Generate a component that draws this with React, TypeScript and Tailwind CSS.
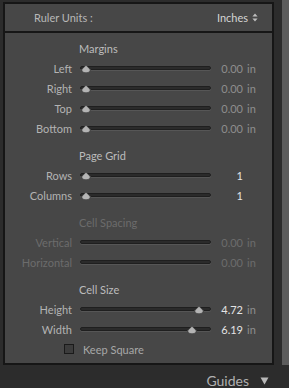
import { ReactNode } from "react";

type SliderRowProps = {
  label: string;
  value: string;
  unit?: string;
  pos?: number;
  disabled?: boolean;
  bright?: boolean;
};

function Thumb() {
  return (
    <svg width="10" height="8" viewBox="0 0 10 8" className="absolute top-[-2px]">
      <path d="M5 0.3 L9 4.2 Q9.7 7.7 5 7.7 Q0.3 7.7 1 4.2 Z" fill="#b4b4b4" stroke="#2a2a2a" strokeWidth="0.5" />
    </svg>
  );
}

function SliderRow({ label, value, unit, pos, disabled, bright }: SliderRowProps) {
  return (
    <div className="flex items-center h-[20px]">
      <div className={`w-[67px] text-right ${disabled ? "text-[#6c6c6c]" : "text-[#b3b3b3]"}`}>{label}</div>
      <div className="relative ml-[8px] w-[131px] h-[4px] rounded-full bg-[#2b2b2b] border border-[#1f1f1f] shadow-[0_1px_0_#565656]">
        {pos !== undefined && (
          <div
            className="absolute"
            style={{ left: `${pos}px` }}>
            <Thumb />
          </div>
        )}
      </div>
      <div className="flex ml-[8px] w-[50px]">
        <span className={`w-[24px] text-right ${disabled ? "text-[#6c6c6c]" : bright ? "text-[#e4e4e4]" : "text-[#8e8e8e]"}`}>{value}</span>
        {unit && <span className={`ml-[4px] ${disabled ? "text-[#6c6c6c]" : "text-[#8e8e8e]"}`}>{unit}</span>}
      </div>
    </div>
  );
}

function Section({ title, disabled, children }: { title: string; disabled?: boolean; children: ReactNode }) {
  return (
    <div className="flex flex-col">
      <div className={`pl-[74px] h-[20px] flex items-center ${disabled ? "text-[#6c6c6c]" : "text-[#bcbcbc]"}`}>{title}</div>
      {children}
    </div>
  );
}

export default function App() {
  return (
    <div
      className="w-[289px] h-[388px] overflow-hidden bg-[#2c2c2c] flex text-[11px] leading-none"
      style={{ fontFamily: "Lato, 'Liberation Sans', sans-serif" }}>
      <div className="w-[282px] flex flex-col">
        <div className="h-[6px]" />
        <div className="ml-[3px] w-[271px] border-2 border-[#161616] bg-[#474747] flex flex-col">
          <div className="h-[29px] flex items-center justify-between pl-[29px] pr-[14px] border-b-2 border-[#161616]">
            <span className="text-[#b8b8b8]">Ruler Units :</span>
            <span className="flex items-center gap-[4px] text-[#d4d4d4]">
              Inches
              <svg width="6" height="9" viewBox="0 0 6 9">
                <path d="M3 0.5 L5.6 3.6 L0.4 3.6 Z M3 8.5 L5.6 5.4 L0.4 5.4 Z" fill="#bdbdbd" />
              </svg>
            </span>
          </div>
          <div className="flex flex-col gap-[7px] pt-[5px] pb-[4px]">
            <Section title="Margins">
              <SliderRow label="Left" value="0.00" unit="in" pos={0} />
              <SliderRow label="Right" value="0.00" unit="in" pos={0} />
              <SliderRow label="Top" value="0.00" unit="in" pos={0} />
              <SliderRow label="Bottom" value="0.00" unit="in" pos={0} />
            </Section>
            <Section title="Page Grid">
              <SliderRow label="Rows" value="1" pos={0} bright />
              <SliderRow label="Columns" value="1" pos={0} bright />
            </Section>
            <Section title="Cell Spacing" disabled>
              <SliderRow label="Vertical" value="0.00" unit="in" disabled />
              <SliderRow label="Horizontal" value="0.00" unit="in" disabled />
            </Section>
            <Section title="Cell Size">
              <SliderRow label="Height" value="4.72" unit="in" pos={113} bright />
              <SliderRow label="Width" value="6.19" unit="in" pos={106} bright />
              <div className="flex items-center h-[20px] pl-[59px]">
                <span className="w-[10px] h-[10px] border border-[#1a1a1a] bg-[#3c3c3c]" />
                <span className="ml-[9px] text-[#a8a8a8]">Keep Square</span>
              </div>
            </Section>
          </div>
        </div>
        <div className="flex justify-end items-start pr-[13px] pt-[9px] gap-[11px] text-[#b0b0b0] text-[14px]">
          <span>Guides</span>
          <svg width="9" height="8" viewBox="0 0 9 8" className="mt-[3px]">
            <path d="M0.5 0.5 L8.5 0.5 L4.5 7.5 Z" fill="#b8b8b8" />
          </svg>
        </div>
      </div>
      <div className="w-[7px] flex flex-col">
        <div className="h-[365px] bg-[#5c5c5c]" />
      </div>
    </div>
  );
}
